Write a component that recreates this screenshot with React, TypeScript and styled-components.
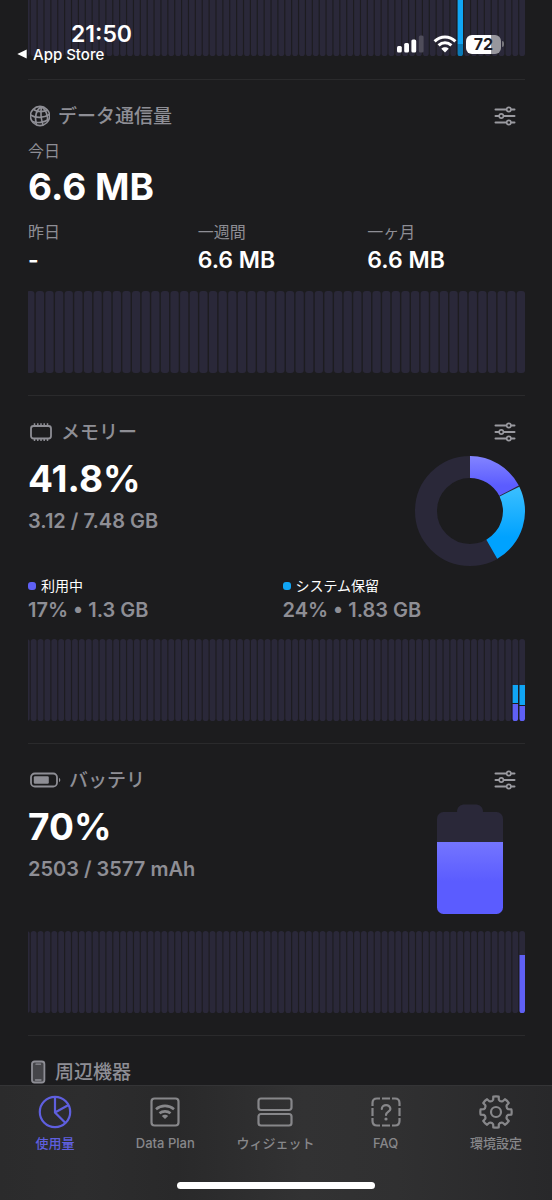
import React from "react";
import styled, { createGlobalStyle } from "styled-components";

const color = {
  bg: "#1c1c1e",
  track: "#2a2839",
  muted: "#8e8e95",
  line: "#2a2a2c",
  violet: "#5f60f5",
  blue: "#10a5f5",
  tab: "#87878a",
};

const GlobalStyle = createGlobalStyle`
  * { box-sizing: border-box; }
  body {
    margin: 0;
    background: ${color.bg};
    color: #fff;
    font-family: Inter, "Noto Sans CJK JP", sans-serif;
  }
  button { font: inherit; color: inherit; background: none; border: 0; padding: 0; cursor: pointer; }
`;

const Screen = styled.div`
  position: relative;
  display: flex;
  flex-direction: column;
  height: 100vh;
  overflow: hidden;
`;

const Scroll = styled.main`
  flex: 1;
  min-height: 0;
  overflow-y: auto;
  scrollbar-width: none;
  padding: 0 27px 0 28px;
`;

/* ---------- status bar ---------- */

const StatusBar = styled.header`
  position: absolute;
  inset: 0 0 auto 0;
  display: flex;
  justify-content: space-between;
  padding: 23px 48px 0 17px;
`;

const StatusLeft = styled.div`
  display: flex;
  flex-direction: column;
`;

const Clock = styled.time`
  padding-left: 54px;
  font-size: 23px;
  line-height: 23px;
  font-weight: 600;
`;

const BackLink = styled.button`
  display: flex;
  align-items: center;
  gap: 6px;
  height: 16px;
  && { font-size: 15px; font-weight: 500; color: #fff; }
`;

const StatusRight = styled.div`
  display: flex;
  align-items: center;
  gap: 9px;
  height: 20px;
  margin-top: 11px;
`;

const BatteryLevel = styled.div`
  display: flex;
  align-items: center;
  gap: 1px;
`;

const BatteryPill = styled.span`
  width: 35px;
  height: 19px;
  border-radius: 6px;
  background: linear-gradient(90deg, #fff 72%, #98979d 72%);
  color: #1c1c24;
  font-size: 16px;
  line-height: 19px;
  font-weight: 700;
  text-align: center;
`;

const BatteryNub = styled.span`
  width: 2px;
  height: 6px;
  border-radius: 0 2px 2px 0;
  background: #77767d;
`;

/* ---------- sections ---------- */

const Peek = styled.div`
  display: flex;
  align-items: flex-end;
  height: 79px;
  padding-bottom: 23px;
  overflow: hidden;
`;

const Section = styled.section`
  border-top: 1px solid ${color.line};
  padding: 20px 0 22px;
`;

const SectionHead = styled.div`
  display: flex;
  align-items: center;
  justify-content: space-between;
  height: 32px;
`;

const Title = styled.h2`
  display: flex;
  align-items: center;
  gap: 8px;
  margin: 0;
  padding-left: 2px;
  font-size: 19px;
  line-height: 28px;
  font-weight: 500;
  color: ${color.muted};
`;

const TitleText = styled.span`
  padding-top: 2px;
`;

const OptionsButton = styled.button`
  display: grid;
  place-items: center;
  width: 40px;
  height: 32px;
`;

const Label = styled.div`
  font-size: 16px;
  line-height: 20px;
  color: ${color.muted};
`;

const BigValue = styled.div`
  font-size: 37px;
  line-height: 46px;
  font-weight: 700;
`;

const MidValue = styled.div`
  font-size: 23px;
  line-height: 28px;
  font-weight: 600;
  margin-top: 4px;
`;

const SubValue = styled.div<{ $top?: number }>`
  font-size: 20px;
  line-height: 28px;
  font-weight: 600;
  color: ${color.muted};
  margin-top: ${(p) => p.$top ?? 0}px;
`;

const Today = styled.div`
  display: flex;
  flex-direction: column;
  gap: 3px;
  padding-top: 9px;
`;

const Grid = styled.div<{ $cols: number; $top: number; $bottom: number }>`
  display: grid;
  grid-template-columns: repeat(${(p) => p.$cols}, 1fr);
  column-gap: 12px;
  margin: ${(p) => p.$top}px 0 ${(p) => p.$bottom}px;
`;

const Summary = styled.div`
  display: flex;
  justify-content: space-between;
  height: 110px;
  margin-top: 8px;
`;

const Figure = styled.div`
  display: grid;
  place-items: center;
  width: 110px;
`;

const Legend = styled.div`
  display: flex;
  align-items: center;
  gap: 5px;
  font-size: 14px;
  line-height: 20px;
`;

const Dot = styled.span<{ $color: string }>`
  width: 8px;
  height: 8px;
  border-radius: 3px;
  background: ${(p) => p.$color};
`;

const ChartSvg = styled.svg<{ $top?: number }>`
  display: block;
  flex: none;
  width: 100%;
  height: 82px;
  margin-top: ${(p) => p.$top ?? 0}px;
`;

/* ---------- tab bar ---------- */

const TabBar = styled.nav`
  flex: none;
  border-top: 1px solid #343436;
  background: linear-gradient(90deg, #2b2b2c 0%, #2d2d2e 15%, #29292a 32%, #323233 55%, #303031 72%, #28282a 100%);
  height: 115px;
  display: flex;
  flex-direction: column;
  justify-content: space-between;
  align-items: center;
  padding-bottom: 11px;
`;

const Tabs = styled.div`
  display: grid;
  grid-template-columns: repeat(5, 1fr);
  width: 100%;
  padding-right: 1px;
`;

const Tab = styled.button<{ $active?: boolean }>`
  display: flex;
  flex-direction: column;
  align-items: center;
  padding-top: 8px;
  && { color: ${(p) => (p.$active ? "#5f5fdf" : color.tab)}; }
`;

const TabLabel = styled.span`
  margin-top: 3px;
  font-size: 13px;
  line-height: 20px;
  font-weight: 500;
`;

const HomeIndicator = styled.div`
  width: 36%;
  height: 7px;
  border-radius: 4px;
  background: #fff;
`;

/* ---------- chart ---------- */

type Segment = { from: number; to: number; fill: string };

/** Bars are laid out from the right edge; the oldest one is cut by the left edge. */
function BarChart({
  label,
  pitch,
  bar,
  data = {},
  top,
}: {
  label: string;
  pitch: number;
  bar: number;
  data?: Record<number, Segment[]>;
  top?: number;
}) {
  const id = React.useId();
  const width = 497;
  const count = Math.ceil(width / pitch);
  const xs = Array.from({ length: count }, (_, i) => width - i * pitch - bar);
  return (
    <ChartSvg viewBox="0 0 497 82" preserveAspectRatio="none" role="img" aria-label={label} $top={top}>
      <clipPath id={id}>
        {xs.map((x, i) => (
          <rect key={i} x={x} y={0} width={bar} height={82} rx={Math.min(3, bar / 2)} />
        ))}
      </clipPath>
      <rect y={1} width={497} height={80} fill="#211f28" opacity={0.3} />
      <g clipPath={`url(#${id})`}>
        <rect width={497} height={82} fill={color.track} />
        {Object.entries(data).map(([i, segments]) =>
          segments.map((s) => (
            <rect key={`${i}-${s.from}`} x={xs[+i]} y={s.from} width={bar} height={s.to - s.from} fill={s.fill} />
          )),
        )}
      </g>
    </ChartSvg>
  );
}

/* ---------- icons ---------- */

const GlobeIcon = () => (
  <svg width="20" height="24" viewBox="0 0 20 24" fill="none" stroke="currentColor" strokeWidth="1.6" aria-hidden>
    <circle cx="10" cy="12" r="9.6" />
    <path d="M11.5 2.5C6 6 4.5 13 6.5 21M11.5 2.5C10.5 8 11 15 13 21M11.5 2.5C16 6 18 11 17.5 17" />
    <path d="M3.5 5.5C8 8.5 14 8 17.5 5.8M.6 11C6 14.5 14 14 19.4 10.5M2.5 17.5C7 19.5 14 18.5 18.5 15.5" />
  </svg>
);

const MemoryIcon = () => (
  <svg width="23" height="20" viewBox="0 0 23 20" fill="none" stroke="currentColor" aria-hidden>
    <rect x="1" y="4" width="20" height="12.5" rx="2.5" strokeWidth="1.8" />
    <path
      d="M4.5 1.2V4M7.8 1.2V4M11 1.2V4M14.2 1.2V4M17.5 1.2V4M4.5 16.5V19M7.8 16.5V19M11 16.5V19M14.2 16.5V19M17.5 16.5V19"
      strokeWidth="1.5"
    />
  </svg>
);

const BatteryIcon = () => (
  <svg width="31" height="16" viewBox="0 0 31 16" fill="none" aria-hidden>
    <rect x="1" y="1.5" width="26" height="13" rx="3.8" stroke="currentColor" strokeWidth="1.8" />
    <rect x="3.8" y="4.3" width="15" height="7.5" rx="1.2" fill="currentColor" />
    <path d="M29 5.8C30.8 6.6 30.8 9.4 29 10.2Z" fill="currentColor" />
  </svg>
);

const PhoneIcon = () => (
  <svg width="17" height="24" viewBox="0 0 17 24" fill="none" aria-hidden>
    <rect x="2" y="1.5" width="12.4" height="21" rx="2.5" fill="#454549" stroke="currentColor" strokeWidth="1.8" />
    <path d="M6 4.2H10.5M5.5 20H11" stroke="currentColor" strokeWidth="1.3" strokeLinecap="round" />
  </svg>
);

const SlidersIcon = () => (
  <svg width="22" height="20" viewBox="0 0 22 20" fill="none" stroke="#9a9aa0" strokeLinecap="round" aria-hidden>
    <path d="M1.5 3.5H20.5M1.5 10H20.5M1.5 16.5H20.5" strokeWidth="2" />
    <g fill={color.bg} strokeWidth="1.6">
      <circle cx="14.8" cy="3.5" r="2.1" />
      <circle cx="7.3" cy="10" r="2.1" />
      <circle cx="14.8" cy="16.5" r="2.1" />
    </g>
  </svg>
);

const SignalIcon = () => (
  <svg width="27" height="18" viewBox="0 0 27 18" fill="#fff" aria-hidden>
    <rect x="0" y="11" width="4.8" height="6.5" rx="1.5" />
    <rect x="7.2" y="8" width="4.8" height="9.5" rx="1.5" />
    <rect x="14.4" y="4.5" width="4.8" height="13" rx="1.5" />
    <rect x="21.8" y="0.5" width="4.8" height="17" rx="1.5" fill="#4f4d5a" />
  </svg>
);

const WifiIcon = () => (
  <svg width="24" height="18" viewBox="0 0 24 18" fill="none" stroke="#fff" strokeWidth="3" aria-hidden>
    <path d="M1.6 6.4C7.5.6 16.5.6 22.4 6.4" />
    <path d="M5.6 10.4C9.3 7 14.7 7 18.4 10.4" />
    <path d="M12 17.5L8.3 13.7C10.4 11.9 13.6 11.9 15.7 13.7Z" fill="#fff" stroke="none" />
  </svg>
);

const polar = (r: number, deg: number) => {
  const a = (deg * Math.PI) / 180;
  return [r * Math.sin(a), -r * Math.cos(a)].map((n) => n.toFixed(2)).join(" ");
};

const ring = (from: number, to: number, outer = 55, inner = 33) =>
  `M${polar(outer, from)}A${outer} ${outer} 0 0 1 ${polar(outer, to)}L${polar(inner, to)}A${inner} ${inner} 0 0 0 ${polar(inner, from)}Z`;

const MemoryDonut = () => (
  <svg width="110" height="110" viewBox="-55 -55 110 110" role="img" aria-label="メモリー 41.8%">
    <defs>
      <linearGradient id="donutViolet" x1="0" y1="0" x2="0" y2="1">
        <stop offset="0" stopColor="#8384ff" />
        <stop offset="0.75" stopColor="#5b5cff" />
      </linearGradient>
      <linearGradient id="donutBlue" x1="0" y1="0" x2="0" y2="1">
        <stop offset="0" stopColor="#3cc0ff" />
        <stop offset="0.7" stopColor="#00a2ff" />
      </linearGradient>
    </defs>
    <circle r="44" fill="none" stroke={color.track} strokeWidth="22" />
    <path d={ring(0, 62.5)} fill="url(#donutViolet)" />
    <path d={ring(63.7, 150.3)} fill="url(#donutBlue)" />
  </svg>
);

const BatteryFigure = () => (
  <svg width="66" height="110" viewBox="0 0 66 110" role="img" aria-label="バッテリ 70%">
    <defs>
      <linearGradient id="charge" x1="0" y1="0" x2="0" y2="1">
        <stop offset="0" stopColor="#7475ff" />
        <stop offset="0.55" stopColor="#5b5cff" />
      </linearGradient>
    </defs>
    <path d="M20 8C20 3 23 .5 28 .5H38C43 .5 46 3 46 8Z" fill={color.track} />
    <rect y="8" width="66" height="102" rx="6.5" fill={color.track} />
    <path d="M0 38H66V103.5A6.5 6.5 0 0 1 59.5 110H6.5A6.5 6.5 0 0 1 0 103.5Z" fill="url(#charge)" />
  </svg>
);

const tabIcon = {
  width: 36,
  height: 36,
  viewBox: "-18 -18 36 36",
  fill: "none",
  stroke: "currentColor",
  strokeWidth: 2.2,
  "aria-hidden": true,
};

const UsageIcon = () => (
  <svg {...tabIcon}>
    <circle r="15.2" />
    <path d="M0 -15V.5L10.5 11M0 .5L13.5 -7" />
  </svg>
);

const PlanIcon = () => (
  <svg {...tabIcon}>
    <rect x="-13.5" y="-13.5" width="27" height="27" rx="3" />
    <path d="M-9 -2.8C-4 -7.2 4 -7.2 9 -2.8M-5.5 1.3C-2.5 -1.3 2.5 -1.3 5.5 1.3" strokeWidth="2.6" />
    <path d="M0 7L-3.2 4C-1.5 2.3 1.5 2.3 3.2 4Z" fill="currentColor" stroke="none" />
  </svg>
);

const WidgetIcon = () => (
  <svg {...tabIcon}>
    <rect x="-16.5" y="-13.5" width="33" height="11.5" rx="2.5" />
    <rect x="-16.5" y="2" width="33" height="11.5" rx="2.5" />
  </svg>
);

const FaqIcon = () => (
  <svg {...tabIcon}>
    <path d="M-13.5 -6V-9Q-13.5 -13.5 -9 -13.5H-6M6 -13.5H9Q13.5 -13.5 13.5 -9V-6M13.5 6V9Q13.5 13.5 9 13.5H6M-6 13.5H-9Q-13.5 13.5 -13.5 9V6M-4 -13.5H4M-4 13.5H4M-13.5 -4V4M13.5 -4V4" />
    <path d="M-4.2 -3C-4.2 -8.2 4.4 -8.2 4.4 -3C4.4 -.4 0 -.2 0 3" strokeLinecap="round" />
    <circle cy="7" r="1.6" fill="currentColor" stroke="none" />
  </svg>
);

const gearPath =
  Array.from({ length: 8 }, (_, i) => {
    const a = i * 45;
    return `${i ? "L" : "M"}${polar(12.6, a - 13)}L${polar(15.6, a - 10)}Q${polar(16, a)} ${polar(15.6, a + 10)}L${polar(12.6, a + 13)}Q${polar(10.8, a + 22.5)} ${polar(12.6, a + 32)}`;
  }).join("") + "Z";

const GearIcon = () => (
  <svg {...tabIcon}>
    <path d={gearPath} strokeLinejoin="round" />
    <circle r="5" />
  </svg>
);

/* ---------- screen ---------- */

function Head({ icon, title, options = true }: { icon: React.ReactNode; title: string; options?: boolean }) {
  return (
    <SectionHead>
      <Title>
        {icon}
        <TitleText>{title}</TitleText>
      </Title>
      {options && (
        <OptionsButton aria-label={`${title} オプション`}>
          <SlidersIcon />
        </OptionsButton>
      )}
    </SectionHead>
  );
}

const periods = [
  ["昨日", "-"],
  ["一週間", "6.6 MB"],
  ["一ヶ月", "6.6 MB"],
];

const memory = [
  { name: "利用中", value: "17% • 1.3 GB", color: color.violet },
  { name: "システム保留", value: "24% • 1.83 GB", color: color.blue },
];

const tabs = [
  { name: "使用量", icon: <UsageIcon />, active: true },
  { name: "Data Plan", icon: <PlanIcon /> },
  { name: "ウィジェット", icon: <WidgetIcon /> },
  { name: "FAQ", icon: <FaqIcon /> },
  { name: "環境設定", icon: <GearIcon /> },
];

export default function App() {
  return (
    <Screen>
      <GlobalStyle />
      <Scroll>
        <Peek>
          <BarChart
            label="履歴"
            pitch={6.88}
            bar={5.7}
            data={{
              9: [
                { from: 0, to: 70, fill: color.blue },
                { from: 70, to: 82, fill: "#0b7bb8" },
              ],
            }}
          />
        </Peek>

        <Section>
          <Head icon={<GlobeIcon />} title="データ通信量" />
          <Today>
            <Label>今日</Label>
            <BigValue>6.6 MB</BigValue>
          </Today>
          <Grid $cols={3} $top={12} $bottom={17}>
            {periods.map(([name, value]) => (
              <div key={name}>
                <Label>{name}</Label>
                <MidValue>{value}</MidValue>
              </div>
            ))}
          </Grid>
          <BarChart label="データ通信量の履歴" pitch={9.62} bar={8.2} />
        </Section>

        <Section>
          <Head icon={<MemoryIcon />} title="メモリー" />
          <Summary>
            <div>
              <BigValue>41.8%</BigValue>
              <SubValue $top={5}>3.12 / 7.48 GB</SubValue>
            </div>
            <Figure>
              <MemoryDonut />
            </Figure>
          </Summary>
          <Grid $cols={2} $top={10} $bottom={15}>
            {memory.map((m) => (
              <div key={m.name}>
                <Legend>
                  <Dot $color={m.color} />
                  {m.name}
                </Legend>
                <SubValue>{m.value}</SubValue>
              </div>
            ))}
          </Grid>
          <BarChart
            label="メモリーの履歴"
            pitch={6.88}
            bar={5.7}
            data={{
              0: [
                { from: 46, to: 66, fill: color.blue },
                { from: 66, to: 67, fill: color.bg },
                { from: 67, to: 82, fill: color.violet },
              ],
              1: [
                { from: 46, to: 64, fill: color.blue },
                { from: 64, to: 65, fill: color.bg },
                { from: 65, to: 82, fill: color.violet },
              ],
            }}
          />
        </Section>

        <Section>
          <Head icon={<BatteryIcon />} title="バッテリ" />
          <Summary>
            <div>
              <BigValue>70%</BigValue>
              <SubValue $top={5}>2503 / 3577 mAh</SubValue>
            </div>
            <Figure>
              <BatteryFigure />
            </Figure>
          </Summary>
          <BarChart
            label="バッテリの履歴"
            pitch={6.88}
            bar={5.7}
            top={17}
            data={{ 0: [{ from: 24, to: 82, fill: color.violet }] }}
          />
        </Section>

        <Section>
          <Head icon={<PhoneIcon />} title="周辺機器" options={false} />
        </Section>
      </Scroll>

      <StatusBar>
        <StatusLeft>
          <Clock>21:50</Clock>
          <BackLink>
            <svg width="10" height="10" viewBox="0 0 10 10" fill="#fff" aria-hidden>
              <path d="M.3 5L9.7 .5V9.5Z" />
            </svg>
            App Store
          </BackLink>
        </StatusLeft>
        <StatusRight>
          <SignalIcon />
          <WifiIcon />
          <BatteryLevel>
            <BatteryPill>72</BatteryPill>
            <BatteryNub />
          </BatteryLevel>
        </StatusRight>
      </StatusBar>

      <TabBar>
        <Tabs>
          {tabs.map((t) => (
            <Tab key={t.name} $active={t.active} aria-current={t.active ? "page" : undefined}>
              {t.icon}
              <TabLabel>{t.name}</TabLabel>
            </Tab>
          ))}
        </Tabs>
        <HomeIndicator />
      </TabBar>
    </Screen>
  );
}
